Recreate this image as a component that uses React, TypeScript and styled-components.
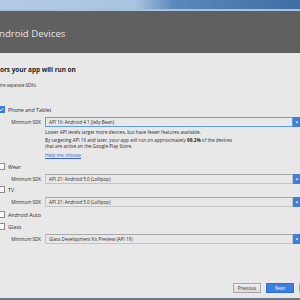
import React from 'react';
import styled, { createGlobalStyle } from 'styled-components';

const Global = createGlobalStyle`
  html, body {
    margin: 0;
    padding: 0;
    background: #e8e8e8;
  }
  #root {
    width: 300px;
    height: 300px;
    overflow: hidden;
  }
`;

const Window = styled.div`
  width: 300px;
  height: 300px;
  display: flex;
  flex-direction: column;
  font-family: 'Open Sans', 'Liberation Sans', sans-serif;
  color: #2b2b2b;
  background: #e8e8e8;
  overflow: hidden;
`;

const TitleBar = styled.div`
  height: 9px;
  flex: none;
  background: linear-gradient(to right, #b4cbe4 0%, #a9c4e0 45%, #5b88bb 58%, #3f6ea4 100%);
  border-bottom: 2px solid #a8c2de;
`;

const Header = styled.div`
  height: 42px;
  flex: none;
  background: #606060;
  display: flex;
  align-items: center;
  padding-top: 2px;
  box-sizing: border-box;
`;

const Title = styled.div`
  color: #e4e4e4;
  font-size: 9.6px;
  margin-left: -1px;
`;

const Body = styled.div`
  flex: 1;
  display: flex;
  flex-direction: column;
`;

const Heading = styled.div`
  font-weight: 700;
  font-size: 6.4px;
  line-height: 10px;
  margin-top: 12px;
  color: #1f1f1f;
`;

const Sub = styled.div`
  font-size: 4.4px;
  line-height: 8px;
  margin-top: 6px;
`;

const CheckRow = styled.label<{ gap: number }>`
  display: flex;
  align-items: center;
  height: 9px;
  margin-top: ${p => p.gap}px;
  font-size: 5.3px;
  gap: 3px;
`;

const Box = styled.span<{ checked?: boolean }>`
  width: 7px;
  height: 7px;
  box-sizing: border-box;
  margin-left: -2px;
  border: 1px solid ${p => (p.checked ? '#3b7ddd' : '#8c8c8c')};
  background: ${p => (p.checked ? '#3b7ddd' : '#ffffff')};
  display: flex;
  align-items: center;
  justify-content: center;
`;

const SdkRow = styled.div<{ gap: number }>`
  display: flex;
  align-items: center;
  margin-top: ${p => p.gap}px;
  padding-left: 8px;
  height: 10px;
`;

const SdkLabel = styled.span`
  flex: none;
  width: 33px;
  margin-right: 4px;
  text-align: right;
  font-size: 4.5px;
  white-space: nowrap;
`;

const Combo = styled.div<{ focused?: boolean }>`
  flex: none;
  width: 248px;
  height: 10px;
  box-sizing: border-box;
  border: 1px solid ${p => (p.focused ? '#5f9be8' : '#c4c4c4')};
  border-top-color: ${p => (p.focused ? '#5f9be8' : '#a9a9a9')};
  background: #e8e8e8;
  font-size: 4.6px;
  display: flex;
  align-items: center;
  padding-left: 3px;
  white-space: nowrap;
`;

const Arrow = styled.div`
  width: 8px;
  height: 10px;
  flex: none;
  background: #3c7fdd;
  display: flex;
  align-items: center;
  justify-content: center;
`;

const Info = styled.div`
  padding-left: 45px;
  font-size: 4.7px;
  color: #2b2b2b;
`;

const InfoLine = styled.div<{ gap: number; lh: number }>`
  margin-top: ${p => p.gap}px;
  line-height: ${p => p.lh}px;
  white-space: nowrap;
`;

const Help = styled.a`
  display: block;
  margin-top: 3px;
  line-height: 6px;
  color: #3a5fd8;
  text-decoration: underline;
  font-size: 4.8px;
`;

const Footer = styled.div`
  margin-top: auto;
  display: flex;
  justify-content: flex-end;
  gap: 5px;
  padding-bottom: 5px;
  margin-right: -27px;
`;

const Button = styled.div<{ primary?: boolean }>`
  flex: none;
  width: 28px;
  height: 10px;
  box-sizing: border-box;
  border: 1px solid ${p => (p.primary ? '#2f6fcf' : '#a8a8a8')};
  background: ${p => (p.primary ? '#3a7fe0' : 'linear-gradient(#f0f0f0, #dcdcdc)')};
  color: ${p => (p.primary ? '#ffffff' : '#333333')};
  font-size: 4.6px;
  display: flex;
  align-items: center;
  justify-content: center;
`;

const BottomLine = styled.div`
  height: 2px;
  flex: none;
  background: #6c7a89;
`;

const Check = () => (
  <svg width="5" height="5" viewBox="0 0 10 10">
    <path d="M1.5 5.2 L4 7.6 L8.6 2.4" stroke="#fff" strokeWidth="1.8" fill="none" />
  </svg>
);

const Down = () => (
  <svg width="4" height="3" viewBox="0 0 8 6">
    <path d="M1 1 H7 L4 5 Z" fill="#fff" />
  </svg>
);

const Sdk = ({ gap, value, focused }: { gap: number; value: string; focused?: boolean }) => (
  <SdkRow gap={gap}>
    <SdkLabel>Minimum SDK</SdkLabel>
    <Combo focused={focused}>{value}</Combo>
    <Arrow>
      <Down />
    </Arrow>
  </SdkRow>
);

const Factor = ({ gap, label, checked }: { gap: number; label: string; checked?: boolean }) => (
  <CheckRow gap={gap}>
    <Box checked={checked}>{checked && <Check />}</Box>
    {label}
  </CheckRow>
);

export default function App() {
  return (
    <Window>
      <Global />
      <TitleBar />
      <Header>
        <Title>ndroid Devices</Title>
      </Header>
      <Body>
        <Heading>ors your app will run on</Heading>
        <Sub>ire separate SDKs</Sub>
        <Factor gap={16} label="Phone and Tablet" checked />
        <Sdk gap={3} value="API 16: Android 4.1 (Jelly Bean)" focused />
        <Info>
          <InfoLine gap={1} lh={8}>
            Lower API levels target more devices, but have fewer features available.
          </InfoLine>
          <InfoLine gap={1} lh={6}>
            By targeting API 16 and later, your app will run on approximately <b>99.2%</b> of the devices
          </InfoLine>
          <InfoLine gap={0} lh={6}>
            that are active on the Google Play Store.
          </InfoLine>
          <Help>Help me choose</Help>
        </Info>
        <Factor gap={4} label="Wear" />
        <Sdk gap={3} value="API 21: Android 5.0 (Lollipop)" />
        <Factor gap={1} label="TV" />
        <Sdk gap={3} value="API 21: Android 5.0 (Lollipop)" />
        <Factor gap={3} label="Android Auto" />
        <Factor gap={3} label="Glass" />
        <Sdk gap={3} value="Glass Development Kit Preview (API 19)" />
        <Footer>
          <Button>Previous</Button>
          <Button primary>Next</Button>
          <Button />
        </Footer>
      </Body>
      <BottomLine />
    </Window>
  );
}
